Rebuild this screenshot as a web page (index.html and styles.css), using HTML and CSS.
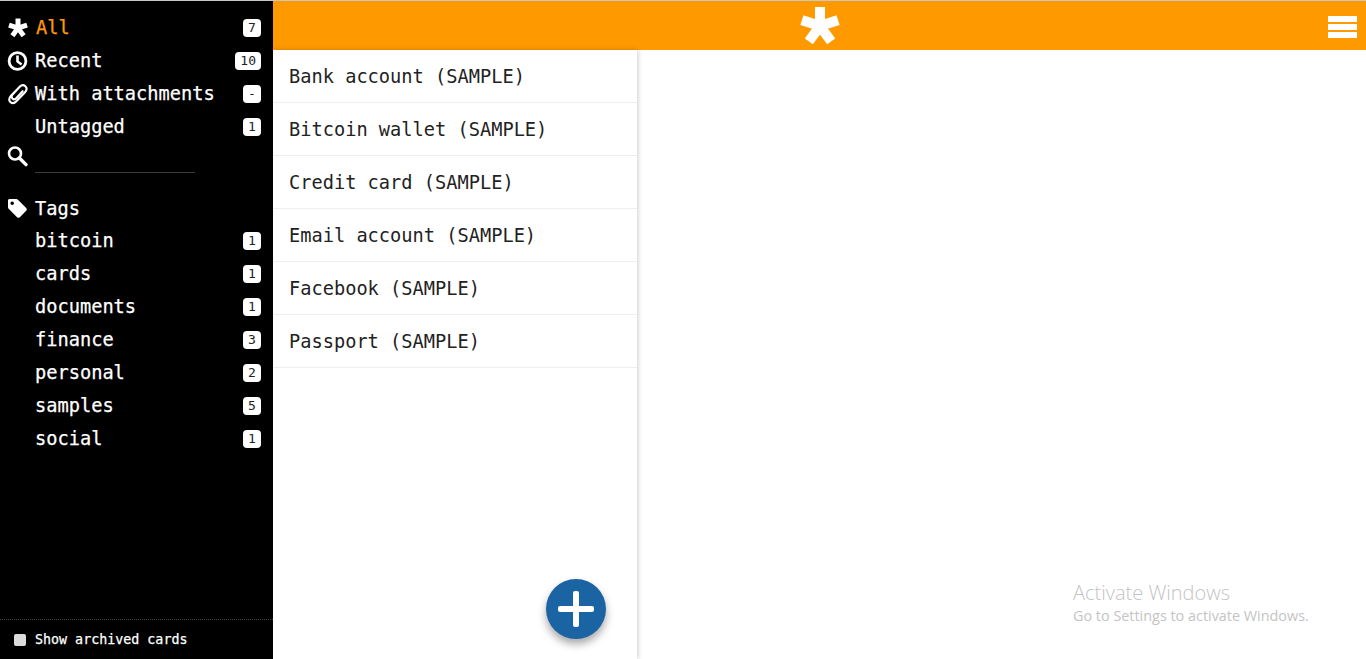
FILE: index.html
```html
<!DOCTYPE html>
<html lang="en">
<head>
    <meta charset="UTF-8">
    <meta name="viewport" content="width=device-width, initial-scale=1.0">
    <title>Cards</title>
    <link rel="stylesheet" href="styles.css">
</head>
<body>
    <div class="app">
        <aside class="sidebar">
            <ul class="filters">
                <li class="filter active">
                    <span class="filter-icon"><svg class="star-icon" width="20" height="20" viewBox="0 0 40 40"><use href="#asterisk"/></svg></span>
                    <span class="filter-name">All</span><span class="badge">7</span>
                </li>
                <li class="filter">
                    <span class="filter-icon"><svg width="22" height="22" viewBox="0 0 22 22" fill="none" stroke="#fff"><circle cx="10.5" cy="11" r="8.4" stroke-width="2.8"/><path d="M10.5 5.6V11.4L14.6 14.6" stroke-width="2.6"/></svg></span>
                    <span class="filter-name">Recent</span><span class="badge">10</span>
                </li>
                <li class="filter">
                    <span class="filter-icon"><svg width="22" height="22" viewBox="0 0 22 22" fill="none" stroke="#fff" stroke-width="2.1" stroke-linecap="round"><path d="M13 3.4 4 12.6C1.8 15.2 2 17.6 3.4 19C5 20.5 7.4 20.4 9.4 18.3L18 9.2C20 7 19.8 4.6 18.4 3.2C16.8 1.8 14.6 1.9 12.9 3.6L5.6 11.6C4.4 13 4.5 14.6 5.5 15.6C6.6 16.6 8 16.4 9.2 15.2L15.6 8.2"/></svg></span>
                    <span class="filter-name">With attachments</span><span class="badge">-</span>
                </li>
                <li class="filter">
                    <span class="filter-icon"></span>
                    <span class="filter-name">Untagged</span><span class="badge">1</span>
                </li>
            </ul>
            <div class="search">
                <span class="filter-icon"><svg width="22" height="22" viewBox="0 0 22 22" fill="none" stroke="#fff"><circle cx="8" cy="8.5" r="6" stroke-width="2.6"/><path d="M12.4 13 19 19.6" stroke-width="3.4" stroke-linecap="round"/></svg></span>
                <div class="search-line"></div>
            </div>
            <div class="filter tags-title">
                <span class="filter-icon"><svg width="22" height="22" viewBox="0 0 22 22"><path fill="#fff" fill-rule="evenodd" d="M1 3.6C1 2.7 1.7 2 2.6 2H9.2C9.8 2 10.3 2.2 10.7 2.6L19.2 11.1C20 11.9 20 13 19.2 13.8L12.8 20.2C12 21 10.9 21 10.1 20.2L1.6 11.7C1.2 11.3 1 10.8 1 10.2ZM5.2 4.4A1.8 1.8 0 1 0 5.2 8A1.8 1.8 0 1 0 5.2 4.4Z"/></svg></span>
                <span class="filter-name">Tags</span>
            </div>
            <ul class="filters">
                <li class="filter"><span class="filter-icon"></span><span class="filter-name">bitcoin</span><span class="badge">1</span></li>
                <li class="filter"><span class="filter-icon"></span><span class="filter-name">cards</span><span class="badge">1</span></li>
                <li class="filter"><span class="filter-icon"></span><span class="filter-name">documents</span><span class="badge">1</span></li>
                <li class="filter"><span class="filter-icon"></span><span class="filter-name">finance</span><span class="badge">3</span></li>
                <li class="filter"><span class="filter-icon"></span><span class="filter-name">personal</span><span class="badge">2</span></li>
                <li class="filter"><span class="filter-icon"></span><span class="filter-name">samples</span><span class="badge">5</span></li>
                <li class="filter"><span class="filter-icon"></span><span class="filter-name">social</span><span class="badge">1</span></li>
            </ul>
            <label class="archived">
                <span class="archived-box"></span>
                <span>Show archived cards</span>
            </label>
        </aside>

        <div class="main">
            <header class="topbar">
                <svg class="logo" width="40" height="40" viewBox="0 0 40 40">
                    <g id="asterisk" fill="#fff">
                        <rect x="15" y="1" width="10" height="20"/>
                        <rect x="15" y="1" width="10" height="20" transform="rotate(72 20 20)"/>
                        <rect x="15" y="1" width="10" height="20" transform="rotate(144 20 20)"/>
                        <rect x="15" y="1" width="10" height="20" transform="rotate(216 20 20)"/>
                        <rect x="15" y="1" width="10" height="20" transform="rotate(288 20 20)"/>
                    </g>
                </svg>
                <div class="menu-button">
                    <span></span><span></span><span></span>
                </div>
            </header>
            <div class="content">
                <section class="card-list">
                    <div class="card-row">Bank account (SAMPLE)</div>
                    <div class="card-row">Bitcoin wallet (SAMPLE)</div>
                    <div class="card-row">Credit card (SAMPLE)</div>
                    <div class="card-row">Email account (SAMPLE)</div>
                    <div class="card-row">Facebook (SAMPLE)</div>
                    <div class="card-row">Passport (SAMPLE)</div>
                    <button class="add-button" aria-label="Add card">
                        <svg width="36" height="36" viewBox="0 0 36 36" fill="#fff"><rect x="15" y="0" width="6" height="36" rx="2"/><rect x="0" y="15" width="36" height="6" rx="2"/></svg>
                    </button>
                </section>
                <section class="detail"></section>
            </div>
        </div>
    </div>
    <div class="watermark">
        <div class="watermark-title">Activate Windows</div>
        <div class="watermark-text">Go to Settings to activate Windows.</div>
    </div>
</body>
</html>
```

FILE: styles.css
```css
* {
    box-sizing: border-box;
}
html, body {
    height: 100%;
}
body {
    margin: 0;
    padding-top: 1px;
    background: #c8c8c8;
    font-family: "DejaVu Sans Mono", monospace;
    overflow: hidden;
}
ul {
    list-style: none;
    margin: 0;
    padding: 0;
}
.app {
    display: flex;
    height: 100%;
}
.sidebar {
    width: 273px;
    flex-shrink: 0;
    display: flex;
    flex-direction: column;
    background: #000;
    color: #fff;
    padding-top: 10px;
    -webkit-text-stroke: 0.25px;
}
.filter {
    display: flex;
    align-items: center;
    height: 33px;
    padding: 0 12px 0 7px;
    font-size: 18.67px;
}
.filter.active .filter-name {
    color: #ff9900;
    padding-left: 1px;
}
.filter-icon {
    width: 28px;
    height: 22px;
    flex-shrink: 0;
}
.filter-icon svg {
    display: block;
}
.filter-icon .star-icon {
    margin: 1px 0 0 1px;
}
.filter-name {
    flex: 1;
}
.badge {
    min-width: 18px;
    height: 18px;
    padding: 0 5px;
    border-radius: 4px;
    background: #fff;
    color: #222;
    font-size: 13px;
    line-height: 18px;
    text-align: center;
    -webkit-text-stroke: 0;
}
.search {
    display: flex;
    padding: 2px 0 0 7px;
    height: 49px;
}
.search-line {
    width: 160px;
    height: 28px;
    border-bottom: 1px solid #3a3a3a;
}
.tags-title {
    height: 32px;
}
.archived {
    display: flex;
    align-items: center;
    margin-top: auto;
    height: 40px;
    padding-left: 14px;
    border-top: 1px dotted #444;
    font-size: 13.33px;
}
.archived-box {
    width: 12px;
    height: 12px;
    margin-right: 9px;
    border-radius: 2px;
    background: #ddd;
}
.main {
    flex: 1;
    display: flex;
    flex-direction: column;
    min-width: 0;
}
.topbar {
    position: relative;
    display: flex;
    justify-content: center;
    align-items: center;
    height: 49px;
    flex-shrink: 0;
    background: #ff9900;
}
.logo {
    margin-top: 1px;
}
.menu-button {
    position: absolute;
    right: 9px;
    top: 15px;
    display: flex;
    flex-direction: column;
    gap: 2px;
}
.menu-button span {
    display: block;
    width: 29px;
    height: 6px;
    background: #fff;
}
.content {
    flex: 1;
    display: flex;
    min-height: 0;
    background: #fff;
}
.card-list {
    position: relative;
    width: 364px;
    flex-shrink: 0;
    background: #fff;
    box-shadow: 1px 0 5px rgba(0, 0, 0, 0.2);
}
.card-row {
    height: 53px;
    padding-left: 16px;
    border-bottom: 1px solid #eee;
    color: #222;
    font-size: 18.67px;
    line-height: 54px;
}
.add-button {
    position: absolute;
    left: 273px;
    top: 529px;
    width: 60px;
    height: 60px;
    padding: 0;
    display: flex;
    justify-content: center;
    align-items: center;
    border: none;
    border-radius: 50%;
    background: #1a64a4;
    box-shadow: 0 5px 9px rgba(0, 0, 0, 0.35);
}
.detail {
    flex: 1;
}
.watermark {
    position: absolute;
    left: 1073px;
    top: 581px;
    color: #c4c4c4;
    font-family: "Open Sans", sans-serif;
}
.watermark-title {
    font-size: 20px;
    font-weight: 300;
    line-height: 24px;
}
.watermark-text {
    font-size: 14.4px;
    line-height: 22px;
}
```
